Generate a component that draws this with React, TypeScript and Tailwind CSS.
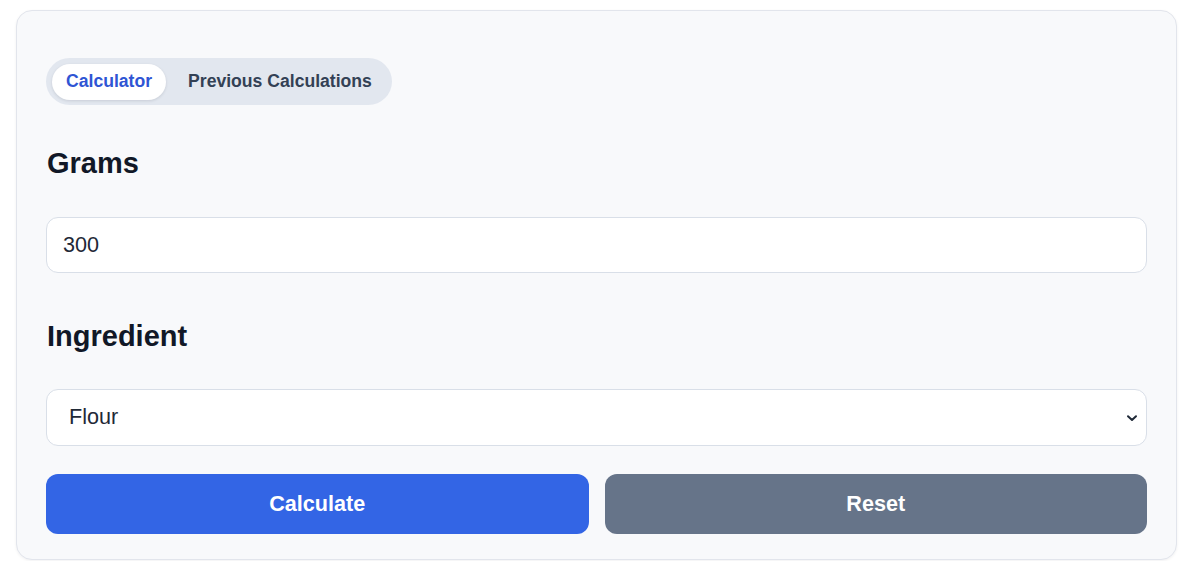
import { useState } from "react";

const font = { fontFamily: '"Liberation Sans", Arial, sans-serif' };

export default function App() {
    const [tab, setTab] = useState<"calc" | "history">("calc");
    const [grams, setGrams] = useState("300");
    const [ingredient, setIngredient] = useState("Flour");

    return (
        <div className="min-h-screen bg-white pt-[10px] pl-4" style={font}>
            <div className="w-[1161px] rounded-2xl border border-[#e2e5ec] bg-[#f8f9fb] px-[29px] pt-[47px] pb-[25px] shadow-[0_1px_3px_rgba(15,23,42,0.06)]">
                <div className="inline-flex h-[47px] items-center gap-2 rounded-full bg-[#e2e7ef] px-[6px]">
                    <button
                        type="button"
                        onClick={() => setTab("calc")}
                        className={`h-[36px] rounded-full px-[14px] text-[17.6px] font-bold ${
                            tab === "calc"
                                ? "bg-white text-[#2f55d4] shadow-[0_1px_3px_rgba(15,23,42,0.12)]"
                                : "text-[#334155]"
                        }`}
                    >
                        Calculator
                    </button>
                    <button
                        type="button"
                        onClick={() => setTab("history")}
                        className={`h-[36px] rounded-full px-[14px] text-[17.6px] font-bold ${
                            tab === "history"
                                ? "bg-white text-[#2f55d4] shadow-[0_1px_3px_rgba(15,23,42,0.12)]"
                                : "text-[#334155]"
                        }`}
                    >
                        Previous Calculations
                    </button>
                </div>

                <h2 className="mt-[40px] pl-[1px] text-[29px] leading-[36px] font-bold text-[#111827]">
                    Grams
                </h2>
                <input
                    type="number"
                    value={grams}
                    onChange={(e) => setGrams(e.target.value)}
                    className="mt-[36px] block h-[56px] w-full rounded-xl border border-[#d9dfe8] bg-white px-4 text-[21.6px] text-[#1f2937] outline-none [appearance:textfield] [&::-webkit-inner-spin-button]:appearance-none"
                />

                <h2 className="mt-[45px] pl-[1px] text-[29px] leading-[36px] font-bold text-[#111827]">
                    Ingredient
                </h2>
                <div className="relative mt-[35px]">
                    <select
                        value={ingredient}
                        onChange={(e) => setIngredient(e.target.value)}
                        className="block h-[57px] w-full appearance-none rounded-xl border border-[#d9dfe8] bg-white pl-[22px] pr-10 text-[21.6px] text-[#1f2937] outline-none"
                    >
                        <option>Flour</option>
                        <option>Sugar</option>
                        <option>Butter</option>
                        <option>Milk</option>
                    </select>
                    <svg
                        className="pointer-events-none absolute top-1/2 right-[9px] -translate-y-1/2"
                        width="12"
                        height="12"
                        viewBox="0 0 12 12"
                        fill="none"
                    >
                        <path
                            d="M2 4.2 6 8l4-3.8"
                            stroke="#1f2937"
                            strokeWidth="2"
                            strokeLinecap="round"
                            strokeLinejoin="round"
                        />
                    </svg>
                </div>

                <div className="mt-[28px] grid grid-cols-2 gap-4">
                    <button
                        type="button"
                        className="h-[60px] rounded-xl bg-[#3365e5] text-[21.6px] font-bold text-white"
                    >
                        Calculate
                    </button>
                    <button
                        type="button"
                        onClick={() => setGrams("")}
                        className="h-[60px] rounded-xl bg-[#667489] text-[21.6px] font-bold text-white"
                    >
                        Reset
                    </button>
                </div>
            </div>
        </div>
    );
}
